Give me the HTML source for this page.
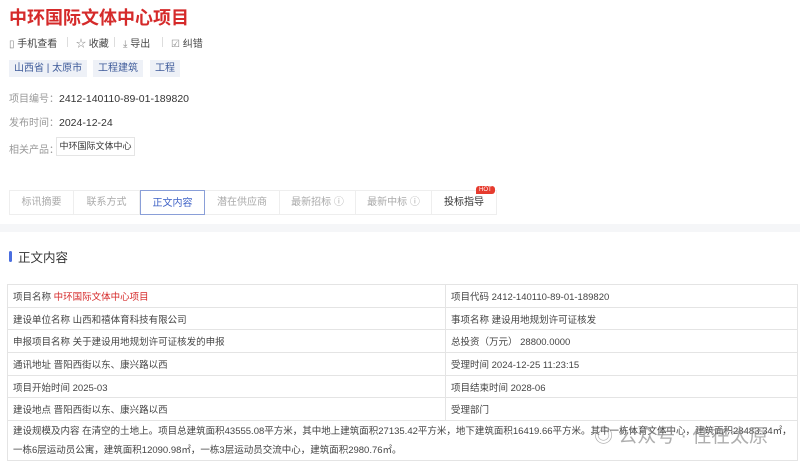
<!DOCTYPE html>
<html><head><meta charset="utf-8"><style>
*{margin:0;padding:0;box-sizing:border-box}
body{width:800px;height:463px;overflow:hidden;background:#fff;font-family:"Liberation Sans","Noto Sans CJK SC",sans-serif;color:#333;position:relative}
.a{position:absolute;white-space:nowrap}
h1{position:absolute;left:9px;top:4px;font-size:18px;color:#d52a2a;font-weight:bold}
.act{top:35px;font-size:10px;color:#444}
.act i{font-style:normal;color:#888}
.sep{top:37px;width:1px;height:10px;background:#ddd}
.tag{top:60px;height:17px;line-height:17px;font-size:10px;color:#3d5a9a;background:#eef1f7;padding:0 5px}
.lbl{font-size:10px;color:#999}
.val{font-size:10px;color:#333}
.tabs{position:absolute;left:9px;top:190px;height:25px;display:flex;border:1px solid #eee}
.tabs div{font-size:10px;color:#aaa;text-align:center;line-height:23px;border-right:1px solid #eee}
table{position:absolute;left:7px;top:284px;width:785px;border-collapse:collapse;font-size:9.5px;color:#444}
td{border:1px solid #e4e4e4;height:22.7px;padding:0 5px;vertical-align:middle}
</style></head><body>
<h1>中环国际文体中心项目</h1>
<div class="a act" style="left:9px"><i>▯</i> 手机查看</div><div class="a sep" style="left:67px"></div>
<div class="a act" style="left:76px"><i>☆</i> 收藏</div><div class="a sep" style="left:114px"></div>
<div class="a act" style="left:123px"><i>⤓</i> 导出</div><div class="a sep" style="left:162px"></div>
<div class="a act" style="left:171px"><i>☑</i> 纠错</div>
<div class="a tag" style="left:9px">山西省 | 太原市</div>
<div class="a tag" style="left:93px">工程建筑</div>
<div class="a tag" style="left:150px">工程</div>
<div class="a lbl" style="left:9px;top:90px">项目编号：<span class="val" style="font-size:10.5px">2412-140110-89-01-189820</span></div>
<div class="a lbl" style="left:9px;top:114px">发布时间：<span class="val" style="font-size:10.5px">2024-12-24</span></div>
<div class="a lbl" style="left:9px;top:141px">相关产品：</div>
<div class="a" style="left:56px;top:137px;width:79px;height:19px;border:1px solid #e5e5e5;font-size:9px;line-height:17px;text-align:center;color:#333">中环国际文体中心</div>
<div class="tabs">
<div style="width:64px">标讯摘要</div><div style="width:66px">联系方式</div>
<div style="width:65px;color:#3f62c6;border:1px solid #8a9fd8;margin:-1px 0;line-height:25px">正文内容</div>
<div style="width:75px">潜在供应商</div><div style="width:76px">最新招标 ⓘ</div><div style="width:76px">最新中标 ⓘ</div>
<div style="width:64px;color:#333;border-right:none">投标指导</div></div>
<div class="a" style="left:476px;top:186px;background:#e63b2e;color:#fff;font-size:6px;padding:1px 3px;border-radius:3px 3px 3px 0">HOT</div>
<div class="a" style="left:0;top:224px;width:800px;height:8px;background:#f5f6f8"></div>
<div class="a" style="left:9px;top:251px;width:3px;height:11px;background:#4a6ee0;border-radius:2px"></div>
<div class="a" style="left:18px;top:247px;font-size:12.5px;color:#333">正文内容</div>
<table>
<tr><td style="width:438px">项目名称 <span style="color:#d52a2a">中环国际文体中心项目</span></td><td>项目代码 2412-140110-89-01-189820</td></tr>
<tr><td>建设单位名称 山西和禧体育科技有限公司</td><td>事项名称 建设用地规划许可证核发</td></tr>
<tr><td>申报项目名称 关于建设用地规划许可证核发的申报</td><td>总投资（万元） 28800.0000</td></tr>
<tr><td>通讯地址 晋阳西街以东、康兴路以西</td><td>受理时间 2024-12-25 11:23:15</td></tr>
<tr><td>项目开始时间 2025-03</td><td>项目结束时间 2028-06</td></tr>
<tr><td>建设地点 晋阳西街以东、康兴路以西</td><td>受理部门</td></tr>
<tr><td colspan="2" style="height:40px;line-height:19px;white-space:nowrap;overflow:hidden">建设规模及内容 在清空的土地上。项目总建筑面积43555.08平方米，其中地上建筑面积27135.42平方米，地下建筑面积16419.66平方米。其中一栋体育文体中心，建筑面积28483.34㎡，<br>一栋6层运动员公寓，建筑面积12090.98㎡，一栋3层运动员交流中心，建筑面积2980.76㎡。</td></tr>
</table>
<div class="a" style="left:594px;top:421px;font-size:19px;color:rgba(140,140,140,0.7)">◎ 公众号 · 住在太原</div>
</body></html>
